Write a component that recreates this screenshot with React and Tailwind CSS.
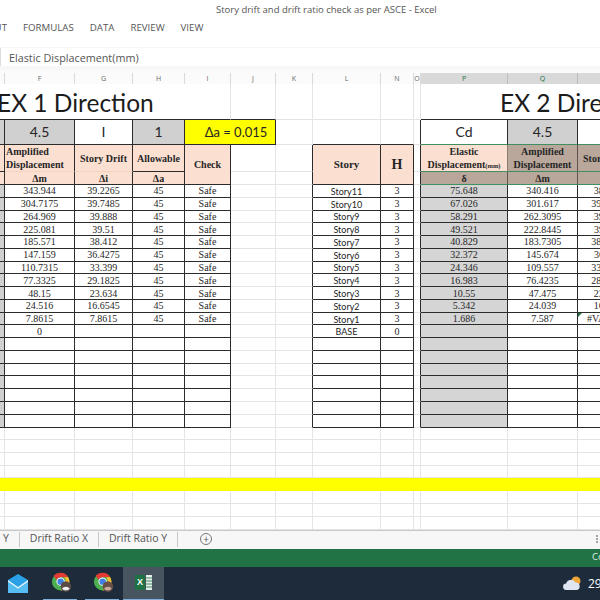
import React from "react";

const COLS = "grid grid-cols-[5px_70px_58px_52px_46px_45px_37px_68px_33px_7px_87px_70px_60px]";
const INK = "border-[#2b2b2b]";
const SOFT = "border-[#e4e4e4]";

const Cell = ({ className = "", children }) => (
  <div className={`flex items-center justify-center overflow-hidden whitespace-nowrap border-r border-b ${className}`}>{children}</div>
);

const NUM = "pt-[1px] font-['Liberation_Serif',serif] text-[10px] leading-none text-[#262626]";
const BOLD = "font-['Liberation_Serif',serif] font-bold leading-[13px] text-[#262626]";
const HEAD = `${BOLD} text-[10px]`;
const CAL = "font-['Lato',sans-serif] leading-none text-[#262626]";
const BIG = `${CAL} text-[14px]`;

const F = ["343.944","304.7175","264.969","225.081","185.571","147.159","110.7315","77.3325","48.15","24.516","7.8615","0"];
const G = ["39.2265","39.7485","39.888","39.51","38.412","36.4275","33.399","29.1825","23.634","16.6545","7.8615",""];
const P = ["75.648","67.026","58.291","49.521","40.829","32.372","24.346","16.983","10.55","5.342","1.686",""];
const Q = ["340.416","301.617","262.3095","222.8445","183.7305","145.674","109.557","76.4235","47.475","24.039","7.587",""];
const R = ["38.799","39.3075","39.465","39.114","38.0565","36.117","33.1335","28.9485","23.436","16.452","#VALUE!",""];
const L = ["Story11","Story10","Story9","Story8","Story7","Story6","Story5","Story4","Story3","Story2","Story1","BASE"];

const bodyRows = Array.from({ length: 19 }, (_, i) => i);
const plainRows = (n) => Array.from({ length: n }, (_, i) => i);
const heads = [
  ["", false], ["F", false], ["G", false], ["H", false], ["I", false], ["J", false], ["K", false],
  ["L", false], ["N", false], ["O", false], ["P", true], ["Q", true], ["", true],
];

function PlainRow() {
  return (
    <>
      {plainRows(13).map((c) => (
        <div key={c} className={`border-r border-b ${SOFT}`} />
      ))}
    </>
  );
}

function Chrome({ shade, shade2 }) {
  return (
    <svg viewBox="0 0 24 24" className="h-[21px] w-[21px]">
      <circle cx="11" cy="11" r="10" fill="#4caf50" />
      <path d="M11 1a10 10 0 0 1 8.7 5H11a5 5 0 0 0-4.6 3L3 4.2A10 10 0 0 1 11 1z" fill="#e53935" />
      <path d="M19.7 6A10 10 0 0 1 11 21l4.3-7.5A5 5 0 0 0 15 6z" fill="#fbc02d" />
      <circle cx="11" cy="11" r="4.8" fill="#fff" />
      <circle cx="11" cy="11" r="3.7" fill="#3f7fe0" />
      <circle cx="17" cy="16.5" r="6" fill={shade} />
      <path d="M12.5 19a5 4 0 0 1 9 0 6 6 0 0 1-9 0z" fill={shade2} />
    </svg>
  );
}

export default function App() {
  return (
    <div className="flex h-[600px] w-[600px] flex-col overflow-hidden bg-white font-['Open_Sans',sans-serif]">
      <div className="flex h-[47px] shrink-0 flex-col">
        <div className="pl-[216px] pt-[2px] text-[9.5px] leading-[15px] text-[#555] whitespace-nowrap">
          Story drift and drift ratio check as per ASCE - Excel
        </div>
        <div className="mt-[4px] flex gap-[16px] text-[9.7px] leading-[14px] text-[#555] whitespace-nowrap">
          <span className="flex w-[7px] justify-end overflow-hidden">UT</span>
          <span>FORMULAS</span>
          <span>DATA</span>
          <span>REVIEW</span>
          <span>VIEW</span>
        </div>
      </div>

      <div className="h-[23px] shrink-0 bg-[#f7f7f7] pt-[1px]">
        <div className="flex h-[18px] items-center border-l border-[#dcdcdc] bg-white pt-[2px] pl-[8px] text-[10.8px] text-[#555]">
          Elastic Displacement(mm)
        </div>
      </div>

      <div className={`${COLS} h-[14px] shrink-0 overflow-hidden bg-[#fbfbfb]`}>
        {heads.map(([t, on], i) => (
          <div
            key={i}
            className={
              on
                ? "mt-[3px] flex items-center justify-center border-r border-b border-r-[#bdbdbd] border-b-[#3f8f63] bg-[#d9d9d9] pt-[1px] text-[7px] text-[#217346]"
                : "mt-[3px] flex items-center justify-center border-r border-b border-r-[#dadada] border-b-[#c4c4c4] pt-[1px] text-[7px] text-[#666]"
            }
          >
            {t}
          </div>
        ))}
      </div>

      <div className="relative h-[445.5px] shrink-0 overflow-hidden">
        <div className={`${COLS} grid-rows-[36px_25px_27px_13px_repeat(19,12.78px)_repeat(4,12.7px)_13px_repeat(3,12.83px)]`}>
          {/* title row */}
          <div className="col-span-5 flex items-center overflow-hidden whitespace-nowrap border-r border-b border-r-[#e4e4e4] border-b-[#2b2b2b] pt-[3px] font-['Lato',sans-serif] text-[24.5px] text-[#1c1c1c]">
            <span className="-ml-[3px]">EX 1 Direction</span>
          </div>
          <div className="border-r border-b border-r-[#e4e4e4] border-b-[#2b2b2b]" />
          <div className={`border-r border-b ${SOFT}`} />
          <div className={`border-r border-b ${SOFT}`} />
          <div className={`border-r border-b ${SOFT}`} />
          <div className={`border-r border-b ${SOFT}`} />
          <div className="col-span-3 flex items-center overflow-hidden whitespace-nowrap border-b border-[#2b2b2b] pt-[3px] pl-[79px] font-['Lato',sans-serif] text-[24.5px] text-[#1c1c1c]">
            EX 2 Direction
          </div>

          {/* factor row */}
          <Cell className={`bg-[#d0d0d0] ${INK}`} />
          <Cell className={`bg-[#d0d0d0] ${INK} ${BIG}`}>4.5</Cell>
          <Cell className={`${INK} ${BIG}`}>I</Cell>
          <Cell className={`bg-[#d0d0d0] ${INK} ${BIG}`}>1</Cell>
          <Cell className={`col-span-2 bg-[#ffff00] pl-[12px] ${INK} ${CAL} text-[13px]`}>Δa = 0.015</Cell>
          <Cell className={SOFT} />
          <Cell className="border-r-[#e4e4e4] border-b-[#2b2b2b]" />
          <Cell className="border-r-[#e4e4e4] border-b-[#2b2b2b]" />
          <Cell className="border-r-[#2b2b2b] border-b-[#e4e4e4]" />
          <Cell className={`border-r-[#2b2b2b] border-b-[#3f8f63] ${BIG}`}>Cd</Cell>
          <Cell className={`border-r-[#2b2b2b] border-b-[#3f8f63] bg-[#d0d0d0] ${BIG}`}>4.5</Cell>
          <Cell className="border-r-[#2b2b2b] border-b-[#3f8f63]" />

          {/* header rows */}
          <Cell className={`bg-[#fbe0d2] ${INK}`} />
          <Cell className={`justify-start border-r-[#2b2b2b] border-b-[#f3d2c0] bg-[#fbe0d2] pl-[1px] ${HEAD}`}>
            <div>Amplified<br />Displacement</div>
          </Cell>
          <Cell className={`border-r-[#2b2b2b] border-b-[#f3d2c0] bg-[#fbe0d2] ${HEAD}`}>Story Drift</Cell>
          <Cell className={`bg-[#fbe0d2] ${INK} ${HEAD}`}>Allowable</Cell>
          <Cell className={`row-span-2 bg-[#fbe0d2] ${INK} ${HEAD}`}>Check</Cell>
          <Cell className={SOFT} />
          <Cell className="border-r-[#2b2b2b] border-b-[#e4e4e4]" />
          <Cell className={`row-span-2 bg-[#fbe0d2] ${INK} ${BOLD} text-[11px]`}>Story</Cell>
          <Cell className={`row-span-2 bg-[#fbe0d2] ${INK} ${BOLD} text-[14px]`}>H</Cell>
          <Cell className="border-r-[#2b2b2b] border-b-[#e4e4e4]" />
          <Cell className={`border-r-[#8a7a70] border-b-[#3f8f63] bg-[#fbe0d2] text-center ${HEAD}`}>
            <div>Elastic<br />Displacement<span className="text-[6.5px]">(mm)</span></div>
          </Cell>
          <Cell className={`border-r-[#5e534c] border-b-[#3f8f63] bg-[#b9a79b] text-center ${HEAD}`}>
            <div>Amplified<br />Displacement</div>
          </Cell>
          <Cell className={`justify-start border-r-[#5e534c] border-b-[#3f8f63] bg-[#b9a79b] pl-[5px] ${HEAD}`}>Story Drift</Cell>

          <Cell className={`bg-[#fbe0d2] ${INK}`} />
          <Cell className={`bg-[#fbe0d2] ${INK} ${HEAD}`}>Δm</Cell>
          <Cell className={`bg-[#fbe0d2] ${INK} ${HEAD}`}>Δi</Cell>
          <Cell className={`bg-[#fbe0d2] ${INK} ${HEAD}`}>Δa</Cell>
          <Cell className={SOFT} />
          <Cell className="border-r-[#2b2b2b] border-b-[#e4e4e4]" />
          <Cell className="border-r-[#2b2b2b] border-b-[#e4e4e4]" />
          <Cell className={`border-r-[#5e534c] border-b-[#3f8f63] bg-[#b9a79b] ${HEAD}`}>δ</Cell>
          <Cell className={`border-r-[#5e534c] border-b-[#3f8f63] bg-[#b9a79b] ${HEAD}`}>Δm</Cell>
          <Cell className={`border-r-[#5e534c] border-b-[#3f8f63] bg-[#b9a79b] ${HEAD}`}>Δi</Cell>

          {/* body */}
          {bodyRows.map((i) => {
            const has = i < 11;
            return (
              <React.Fragment key={i}>
                <Cell className={`bg-[#d0d0d0] ${INK}`} />
                <Cell className={`${INK} ${NUM}`}>{F[i]}</Cell>
                <Cell className={`${INK} ${NUM}`}>{G[i]}</Cell>
                <Cell className={`${INK} ${NUM}`}>{has ? "45" : ""}</Cell>
                <Cell className={`${INK} ${NUM}`}>{has ? "Safe" : ""}</Cell>
                <Cell className={SOFT} />
                <Cell className="border-r-[#2b2b2b] border-b-[#e4e4e4]" />
                <Cell className={`${INK} pt-[1px] ${CAL} text-[9px]`}>{L[i]}</Cell>
                <Cell className={`${INK} ${NUM}`}>{i < 11 ? "3" : i === 11 ? "0" : ""}</Cell>
                <Cell className="border-r-[#2b2b2b] border-b-[#e4e4e4]" />
                <Cell className={`bg-[#d5d5d5] ${INK} ${NUM}`}>{P[i]}</Cell>
                <Cell className={`${INK} ${NUM}`}>{Q[i]}</Cell>
                <Cell className={`relative ${INK} ${NUM}`}>
                  {i === 10 && <span className="absolute top-0 left-0 h-0 w-0 border-t-[4px] border-r-[4px] border-t-[#217346] border-r-transparent" />}
                  {R[i]}
                </Cell>
              </React.Fragment>
            );
          })}

          {plainRows(4).map((i) => <PlainRow key={i} />)}
          <div className="col-span-full bg-[#ffff00]" />
          {plainRows(3).map((i) => <PlainRow key={i} />)}
        </div>
      </div>

      <div className="flex h-[19px] shrink-0 items-center border-t border-[#c8c8c8] bg-[#f7f7f7] pb-[1px] text-[10.5px] text-[#555]">
        <span className="flex h-[15px] w-[20px] items-center border-r border-[#c8c8c8] pl-[3px]">Y</span>
        <span className="flex h-[15px] w-[79px] items-center justify-center border-r border-[#c8c8c8]">Drift Ratio X</span>
        <span className="flex h-[15px] w-[79px] items-center justify-center border-r border-[#c8c8c8]">Drift Ratio Y</span>
        <span className="ml-[22px] flex h-[12px] w-[12px] items-center justify-center rounded-full border border-[#777] text-[10px] leading-none">+</span>
        <span className="ml-auto mr-[2px] flex flex-col gap-[1px]">
          <i className="h-[2px] w-[2px] rounded-full bg-[#888]" />
          <i className="h-[2px] w-[2px] rounded-full bg-[#888]" />
          <i className="h-[2px] w-[2px] rounded-full bg-[#888]" />
        </span>
      </div>

      <div className="flex h-[18px] shrink-0 items-center justify-end overflow-hidden bg-[#217346] text-[9.5px] text-[#dfeee6]">
        <span className="-mr-[40px] w-[48px] whitespace-nowrap">Count: 12</span>
      </div>

      <div className="flex h-[34px] shrink-0 items-stretch bg-[#1d2b3a]">
        <div className="ml-[8px] flex w-[20px] items-center justify-center">
          <svg viewBox="0 0 20 19" className="h-[19px] w-[20px]">
            <path d="M0 6 10 0l10 6v13H0z" fill="#2aa0e6" />
            <path d="M0 6l10 7 10-7v2L10 15 0 8z" fill="#dff1fc" />
            <path d="M0 8l10 7 10-7v11H0z" fill="#56bdf2" />
          </svg>
        </div>
        <div className="ml-[15px] flex w-[34px] items-center justify-center border-b-2 border-[#7fb1de] pl-[2px]">
          <Chrome shade="#5b4a45" shade2="#eeeeee" />
        </div>
        <div className="ml-[8px] flex w-[34px] items-center justify-center border-b-2 border-[#7fb1de] pl-[2px]">
          <Chrome shade="#6b5048" shade2="#c9a9a0" />
        </div>
        <div className="ml-[4px] flex w-[41px] items-center justify-center border-b-2 border-[#7fb1de] bg-[#48545f]">
          <div className="flex items-center gap-[1px]">
            <div className="flex h-[15px] w-[10px] items-center justify-center bg-[#1f7244] font-['Liberation_Sans',sans-serif] text-[9px] font-bold leading-none text-white">X</div>
            <svg viewBox="0 0 6 15" className="h-[15px] w-[6px]">
              <rect width="6" height="15" fill="#e6efe9" />
              <path d="M0 3h6M0 6h6M0 9h6M0 12h6" stroke="#1f7244" strokeWidth=".8" />
            </svg>
          </div>
        </div>
        <div className="ml-auto mr-[-8px] flex items-center gap-[7px]">
          <svg viewBox="0 0 18 15" className="h-[15px] w-[18px]">
            <circle cx="13" cy="5" r="4.5" fill="#f0a63a" />
            <path d="M3.5 14a3.2 3.2 0 0 1-.4-6.4A5 5 0 0 1 12.4 6.6 3.8 3.8 0 0 1 14 14z" fill="#dfe6f2" />
          </svg>
          <span className="w-[20px] overflow-hidden whitespace-nowrap text-[12px] text-white">29°C</span>
        </div>
      </div>
    </div>
  );
}
